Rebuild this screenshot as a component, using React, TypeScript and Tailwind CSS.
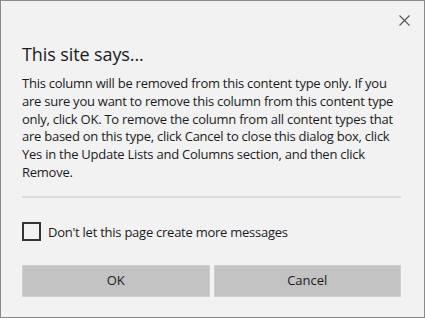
import React from "react";

export default function App() {
  const font = { fontFamily: '"Open Sans", "Noto Sans", sans-serif' };
  return (
    <div
      className="relative w-[425px] h-[318px] border border-[#8a8a8a] bg-[#f2f2f2] text-[#1b1b1b] overflow-hidden"
      style={font}
    >
      <button className="absolute right-[14px] top-[13px] w-[12px] h-[12px] flex items-center justify-center text-[#555]">
        <svg width="11" height="11" viewBox="0 0 11 11" fill="none" stroke="#555" strokeWidth="1.1">
          <path d="M0.5 0.5 L10.5 10.5 M10.5 0.5 L0.5 10.5" />
        </svg>
      </button>
      <div className="pl-[21px] pr-[23px] pt-[40px] flex flex-col">
        <h1 className="text-[18px] leading-[26px] tracking-[-0.1px]">This site says...</h1>
        <p className="mt-[8px] text-[13px] leading-[17.8px] tracking-[-0.25px]">
          This column will be removed from this content type only. If you
          <br />
          are sure you want to remove this column from this content type
          <br />
          only, click OK. To remove the column from all content types that
          <br />
          are based on this type, click Cancel to close this dialog box, click
          <br />
          Yes in the Update Lists and Columns section, and then click
          <br />
          Remove.
        </p>
        <div className="mt-[14px] h-[2px] bg-[#dcdcdc]" />
        <label className="mt-[24px] flex items-center gap-[7px] text-[13px] leading-[20px] tracking-[-0.25px]">
          <span className="w-[19px] h-[19px] border-2 border-[#333] bg-[#f2f2f2]" />
          Don't let this page create more messages
        </label>
        <div className="mt-[23px] flex gap-[4px]">
          <button className="flex-1 h-[32px] bg-[#c3c3c3] border border-[#cfcfcf] text-[13px] text-[#1b1b1b]">
            OK
          </button>
          <button className="flex-1 h-[32px] bg-[#c3c3c3] border border-[#cfcfcf] text-[13px] text-[#1b1b1b]">
            Cancel
          </button>
        </div>
      </div>
    </div>
  );
}
